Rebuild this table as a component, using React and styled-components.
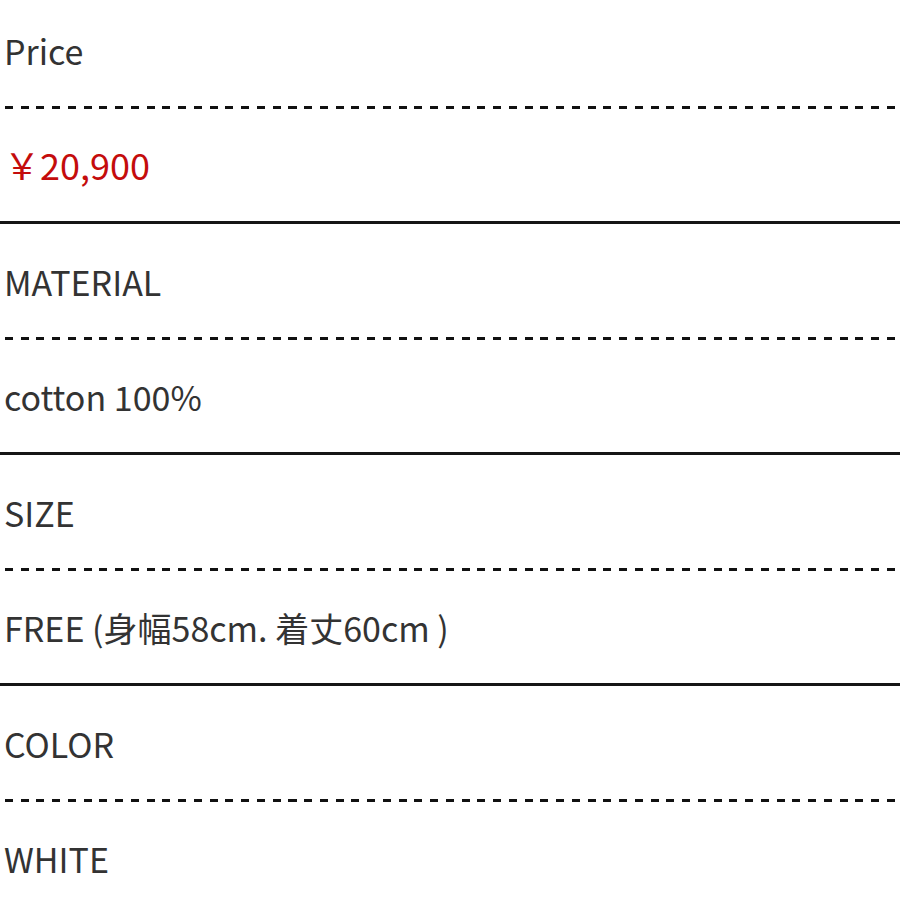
import React from 'react'
import styled, { createGlobalStyle } from 'styled-components'

const GlobalStyle = createGlobalStyle`
  html, body {
    margin: 0;
    padding: 0;
    background: #fff;
  }
  body {
    font-family: "Noto Sans CJK JP", "Noto Sans", sans-serif;
    color: #333;
  }
`

const Wrapper = styled.div`
  width: 900px;
  height: 900px;
  overflow: hidden;
`

const List = styled.div`
  display: flex;
  flex-direction: column;
  margin-top: -7px;
`

const Section = styled.section`
  display: flex;
  flex-direction: column;
  border-bottom: 3px solid #151515;
`

const Label = styled.div`
  height: 113px;
  box-sizing: border-box;
  padding: 35px 0 0 4px;
  font-size: 34px;
  line-height: 46px;
  color: #333;
`

const Value = styled.div`
  height: 112px;
  box-sizing: border-box;
  padding: ${({ accent }) => (accent ? '32px' : '34px')} 0 0 4px;
  font-size: ${({ accent }) => (accent ? '36px' : '34px')};
  line-height: 46px;
  color: ${({ accent }) => (accent ? '#c40c0c' : '#333')};
`

const Dashed = styled.div`
  height: 3px;
  margin: 0 4px 0 5px;
  background: repeating-linear-gradient(
    to right,
    #111 0,
    #111 8px,
    transparent 8px,
    transparent 15.75px
  );
`

const items = [
  { label: 'Price', value: '￥20,900', accent: true },
  { label: 'MATERIAL', value: 'cotton 100%' },
  { label: 'SIZE', value: 'FREE (身幅58cm. 着丈60cm )' },
  { label: 'COLOR', value: 'WHITE' }
]

const App = () => (
  <Wrapper>
    <GlobalStyle />
    <List>
      {items.map(({ label, value, accent }) => (
        <Section key={label}>
          <Label>{label}</Label>
          <Dashed />
          <Value accent={accent}>{value}</Value>
        </Section>
      ))}
    </List>
  </Wrapper>
)

export default App
